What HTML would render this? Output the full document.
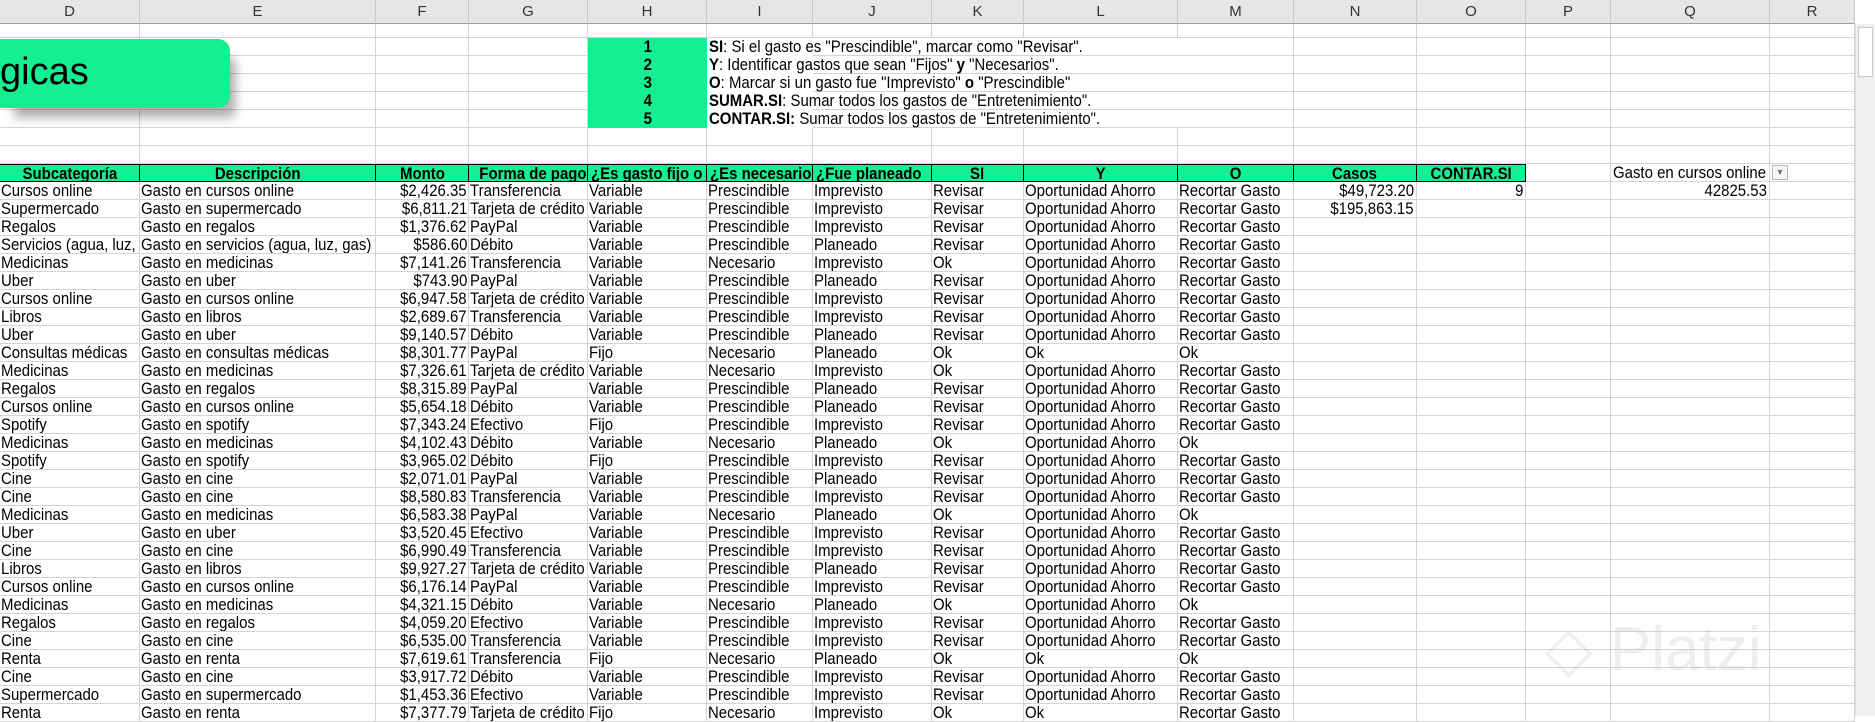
<!DOCTYPE html>
<html><head><meta charset="utf-8">
<style>
*{margin:0;padding:0;box-sizing:border-box}
body{width:1875px;height:716px;overflow:hidden;background:#fff;position:relative;font-family:"Liberation Sans Narrow","Liberation Sans",sans-serif;font-size:17px;color:#000}
.c{position:absolute;height:18px;line-height:18px;border-right:1px solid #d4d4d4;border-bottom:1px solid #d4d4d4;white-space:nowrap;overflow:hidden;padding:0 2px}
.c span.t{display:inline-block;transform:scaleX(.88);transform-origin:0 50%}
.r span.t{transform-origin:100% 50%}
.m span.t{transform-origin:50% 50%}
.r{text-align:right}.m{text-align:center}
.hd{position:absolute;top:0;height:24px;line-height:24px;background:#e6e6e6;border-right:1px solid #c8c8c8;border-bottom:1px solid #a0a0a0;text-align:center;font-family:"Liberation Sans",sans-serif;font-size:15px;color:#333}
.g{background:#14ef91;font-weight:bold}
.th{border:1px solid #000;border-left:none}
</style></head><body>
<div id="root"></div>
<div style="position:absolute;left:0;top:39px;width:230px;height:69px;background:#14ef91;border-radius:0 12px 12px 0;box-shadow:10px 14px 10px -4px rgba(0,0,0,.3);font-family:'Liberation Sans',sans-serif;font-size:38px;line-height:66px;padding-left:0">gicas</div>
<div style="position:absolute;left:1855px;top:24px;width:20px;height:692px;background:#f0f0f0;border-left:1px solid #ddd"><div style="margin:3px 2px;height:50px;background:#fff;border:1px solid #ccc"></div></div>
<div style="position:absolute;left:1545px;top:612px;font-family:'Liberation Sans',sans-serif;font-size:62px;color:rgba(180,190,180,.25)">&#9671; Platzi</div>
<script>
var L=[0,140,376,469,588,707,813,932,1024,1178,1294,1417,1526,1611,1770,1855];
var N="DEFGHIJKLMNOPQR".split("");
var h="";
for(var i=0;i<15;i++)h+='<div class="hd" style="left:'+L[i]+'px;width:'+(L[i+1]-L[i])+'px">'+N[i]+'</div>';
function cell(col,r,txt,cls,extra){var t=r==0?24:38+(r-1)*18,hh=r==0?14:18;
 var s=(txt===undefined||txt==='')?'':'<span class="t">'+txt+'</span>';
 h+='<div class="c '+(cls||'')+'" style="left:'+L[col]+'px;width:'+(L[col+1]-L[col])+'px;top:'+t+'px;height:'+hh+'px;'+(extra||'')+'">'+s+'</div>';}
var ins=['<b>SI</b>: Si el gasto es "Prescindible", marcar como "Revisar".','<b>Y</b>: Identificar gastos que sean "Fijos" <b>y</b> "Necesarios".','<b>O</b>: Marcar si un gasto fue "Imprevisto" <b>o</b> "Prescindible"','<b>SUMAR.SI</b>: Sumar todos los gastos de "Entretenimiento".','<b>CONTAR.SI:</b> Sumar todos los gastos de "Entretenimiento".'];
for(var r=0;r<8;r++)for(var c=0;c<15;c++){
 if(r>=1&&r<=5&&c==4){cell(c,r,String(r),'g m','border-right:none;border-bottom:none');continue;}
 if(r>=1&&r<=5&&(c==6||c==7||c==8)){cell(c,r,'','','border-right:none');continue;}
 if(r>=1&&r<=5&&c==5)continue;
 cell(c,r,'');
}
for(var r=1;r<=5;r++)cell(5,r,ins[r-1],'','overflow:visible;border-right:none;border-bottom:none;z-index:2;background:transparent');
var hdr=["Subcategoría","Descripción","Monto","Forma de pago","¿Es gasto fijo o variable?","¿Es necesario","¿Fue planeado","SI","Y","O","Casos","CONTAR.SI"];
for(var c=0;c<12;c++)cell(c,8,hdr[c],'g th '+(c==4||c==5||c==6?'':'m'),'padding:0 3px;'+(c==0?'border-left:none':''));
cell(12,8,'');
h+='<div class="c" style="left:1611px;width:159px;top:164px;height:18px;padding-left:2px;overflow:visible"><span class="t">Gasto en cursos online</span></div><span style="position:absolute;left:1772px;top:165px;width:16px;height:15px;border:1px solid #bbb;font-size:9px;line-height:13px;text-align:center;color:#777;background:#f6f6f6;z-index:3">&#9660;</span>';
cell(14,8,'');
var D=[
["Cursos online","2,426.35","Transferencia","Variable","Prescindible","Imprevisto",1],
["Supermercado","6,811.21","Tarjeta de crédito","Variable","Prescindible","Imprevisto",1],
["Regalos","1,376.62","PayPal","Variable","Prescindible","Imprevisto",1],
["Servicios (agua, luz, gas)","586.60","Débito","Variable","Prescindible","Planeado",1],
["Medicinas","7,141.26","Transferencia","Variable","Necesario","Imprevisto",2],
["Uber","743.90","PayPal","Variable","Prescindible","Planeado",1],
["Cursos online","6,947.58","Tarjeta de crédito","Variable","Prescindible","Imprevisto",1],
["Libros","2,689.67","Transferencia","Variable","Prescindible","Imprevisto",1],
["Uber","9,140.57","Débito","Variable","Prescindible","Planeado",1],
["Consultas médicas","8,301.77","PayPal","Fijo","Necesario","Planeado",3],
["Medicinas","7,326.61","Tarjeta de crédito","Variable","Necesario","Imprevisto",2],
["Regalos","8,315.89","PayPal","Variable","Prescindible","Planeado",1],
["Cursos online","5,654.18","Débito","Variable","Prescindible","Planeado",1],
["Spotify","7,343.24","Efectivo","Fijo","Prescindible","Imprevisto",1],
["Medicinas","4,102.43","Débito","Variable","Necesario","Planeado",4],
["Spotify","3,965.02","Débito","Fijo","Prescindible","Imprevisto",1],
["Cine","2,071.01","PayPal","Variable","Prescindible","Planeado",1],
["Cine","8,580.83","Transferencia","Variable","Prescindible","Imprevisto",1],
["Medicinas","6,583.38","PayPal","Variable","Necesario","Planeado",4],
["Uber","3,520.45","Efectivo","Variable","Prescindible","Imprevisto",1],
["Cine","6,990.49","Transferencia","Variable","Prescindible","Imprevisto",1],
["Libros","9,927.27","Tarjeta de crédito","Variable","Prescindible","Planeado",1],
["Cursos online","6,176.14","PayPal","Variable","Prescindible","Imprevisto",1],
["Medicinas","4,321.15","Débito","Variable","Necesario","Planeado",4],
["Regalos","4,059.20","Efectivo","Variable","Prescindible","Imprevisto",1],
["Cine","6,535.00","Transferencia","Variable","Prescindible","Imprevisto",1],
["Renta","7,619.61","Transferencia","Fijo","Necesario","Planeado",3],
["Cine","3,917.72","Débito","Variable","Prescindible","Imprevisto",1],
["Supermercado","1,453.36","Efectivo","Variable","Prescindible","Imprevisto",1],
["Renta","7,377.79","Tarjeta de crédito","Fijo","Necesario","Imprevisto",5]];
var OA="Oportunidad Ahorro",RG="Recortar Gasto";
D.forEach(function(d,i){var r=9+i,t=d[6];
 var si=t==1?"Revisar":"Ok",y=(t==3||t==5)?"Ok":OA,o=(t==1||t==2||t==5)?RG:"Ok";
 var row=[d[0],"Gasto en "+d[0].toLowerCase(),"$"+d[1],d[2],d[3],d[4],d[5],si,y,o];
 for(var c=0;c<10;c++)cell(c,r,row[c],c==2?'r':'','padding:0 1px');
 cell(10,r,i==0?"$49,723.20":i==1?"$195,863.15":"",'r');
 cell(11,r,i==0?"9":"",'r');cell(12,r,'');
 cell(13,r,i==0?"42825.53":"",'r');cell(14,r,'');
});
document.getElementById('root').innerHTML=h;
</script>
</body></html>
